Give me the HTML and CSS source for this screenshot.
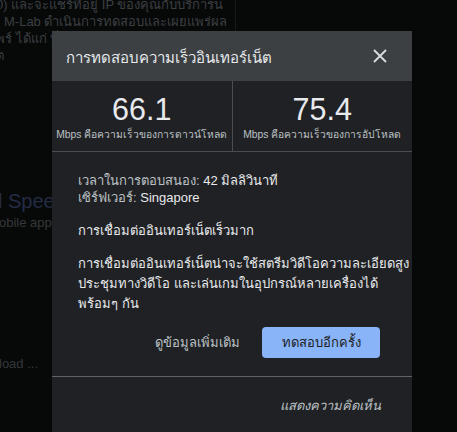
FILE: index.html
```html
<!DOCTYPE html>
<html>
<head>
    <title>การทดสอบความเร็วอินเทอร์เน็ต</title>
    <meta charset="UTF-8">
    <link rel="stylesheet" href="styles.css">
</head>
<body>
    <div class="page">
        <div class="result-card">
            <p class="card-text">0) และจะแชร์ที่อยู่ IP ของคุณกับบริการน</p>
            <p class="card-text">M-Lab ดำเนินการทดสอบและเผยแพร่ผล</p>
            <p class="card-text">พร์ ได้แก่ ที่</p>
            <p class="card-text">ต</p>
        </div>
        <div class="other-result">
            <p class="other-title">l Speed</p>
            <p class="other-text">obile apps</p>
        </div>
        <p class="other-text load">load ...</p>
    </div>

    <div class="dialog">
        <div class="dialog-header">
            <h1>การทดสอบความเร็วอินเทอร์เน็ต</h1>
            <svg class="close" width="14" height="14" viewBox="0 0 14 14">
                <path d="M1 1L13 13M13 1L1 13" stroke="#dadce0" stroke-width="1.8" fill="none"/>
            </svg>
        </div>

        <div class="stats">
            <div class="stat">
                <div class="stat-value">66.1</div>
                <div class="stat-label">Mbps คือความเร็วของการดาวน์โหลด</div>
            </div>
            <div class="stat">
                <div class="stat-value">75.4</div>
                <div class="stat-label">Mbps คือความเร็วของการอัปโหลด</div>
            </div>
        </div>

        <div class="details">
            <div class="info">
                <div><span class="muted">เวลาในการตอบสนอง:</span> 42 มิลลิวินาที</div>
                <div><span class="muted">เซิร์ฟเวอร์:</span> Singapore</div>
            </div>
            <p>การเชื่อมต่ออินเทอร์เน็ตเร็วมาก</p>
            <p class="desc">การเชื่อมต่ออินเทอร์เน็ตน่าจะใช้สตรีมวิดีโอความละเอียดสูง<br>ประชุมทางวิดีโอ และเล่นเกมในอุปกรณ์หลายเครื่องได้<br>พร้อมๆ กัน</p>
        </div>

        <div class="actions">
            <span class="link">ดูข้อมูลเพิ่มเติม</span>
            <button>ทดสอบอีกครั้ง</button>
        </div>

        <div class="feedback">แสดงความคิดเห็น</div>
    </div>
</body>
</html>
```

FILE: styles.css
```css
body {
    margin: 0;
    background: #070909;
    font-family: "Liberation Sans", Arial, sans-serif;
    overflow: hidden;
    height: 432px;
    position: relative;
}
.page {
    width: 457px;
    height: 432px;
}
.result-card {
    width: 235px;
    height: 66px;
    border-right: 1px solid #17191b;
    overflow: hidden;
}
.card-text {
    margin: 0;
    margin-left: -4px;
    font-size: 13px;
    line-height: 17px;
    color: #3c3f42;
    white-space: nowrap;
}
.card-text:first-child {
    margin-top: -4px;
}
.card-text:nth-child(2) {
    margin-left: 4px;
}
.other-result {
    margin-top: 123px;
}
.other-title {
    margin: 0 0 0 -2px;
    font-size: 20px;
    line-height: 24px;
    color: #252b45;
}
.other-text {
    margin: 2px 0 0 -1px;
    font-size: 13px;
    color: #35383b;
}
.load {
    margin-top: 126px;
}

/* dialog */
.dialog {
    position: absolute;
    left: 52px;
    top: 31px;
    width: 360px;
    height: 420px;
    background: #202124;
    color: #e8eaed;
}
.dialog-header {
    height: 50px;
    background: #3c4043;
    display: flex;
    align-items: center;
    justify-content: space-between;
    padding: 0 25px 0 14px;
}
.dialog-header h1 {
    margin: 4px 0 0;
    font-size: 15px;
    font-weight: normal;
    color: #e8eaed;
}
.close {
    margin-top: -1px;
}
.stats {
    display: flex;
    height: 70px;
    border-bottom: 1px solid #4a4d51;
}
.stat {
    flex: 1;
    display: flex;
    flex-direction: column;
    align-items: center;
    padding-top: 11px;
}
.stat + .stat {
    border-left: 1px solid #4a4d51;
}
.stat-value {
    font-size: 30.5px;
    line-height: 35px;
    color: #e8eaed;
}
.stat-label {
    font-size: 10.3px;
    line-height: 14px;
    margin-top: 1px;
    color: #bdc1c6;
}
.details {
    padding: 20px 26px 0;
    font-size: 13px;
}
.details p {
    margin: 0;
}
.info {
    line-height: 17px;
    margin-bottom: 14px;
}
.muted {
    color: #bdc1c6;
}
.details .desc {
    margin-top: 13px;
    line-height: 20px;
    white-space: nowrap;
}
.actions {
    display: flex;
    justify-content: flex-end;
    align-items: center;
    gap: 22px;
    padding: 13px 32px 18px;
    border-bottom: 1px solid #5f6368;
}
.link {
    font-size: 13px;
    color: #bdc1c6;
}
button {
    width: 118px;
    height: 31px;
    background: #8ab4f8;
    color: #202124;
    border: none;
    border-radius: 4px;
    font-family: inherit;
    font-size: 13px;
}
.feedback {
    padding: 18px 31px 0;
    text-align: right;
    font-size: 13px;
    font-style: italic;
    color: #bdc1c6;
}
```
